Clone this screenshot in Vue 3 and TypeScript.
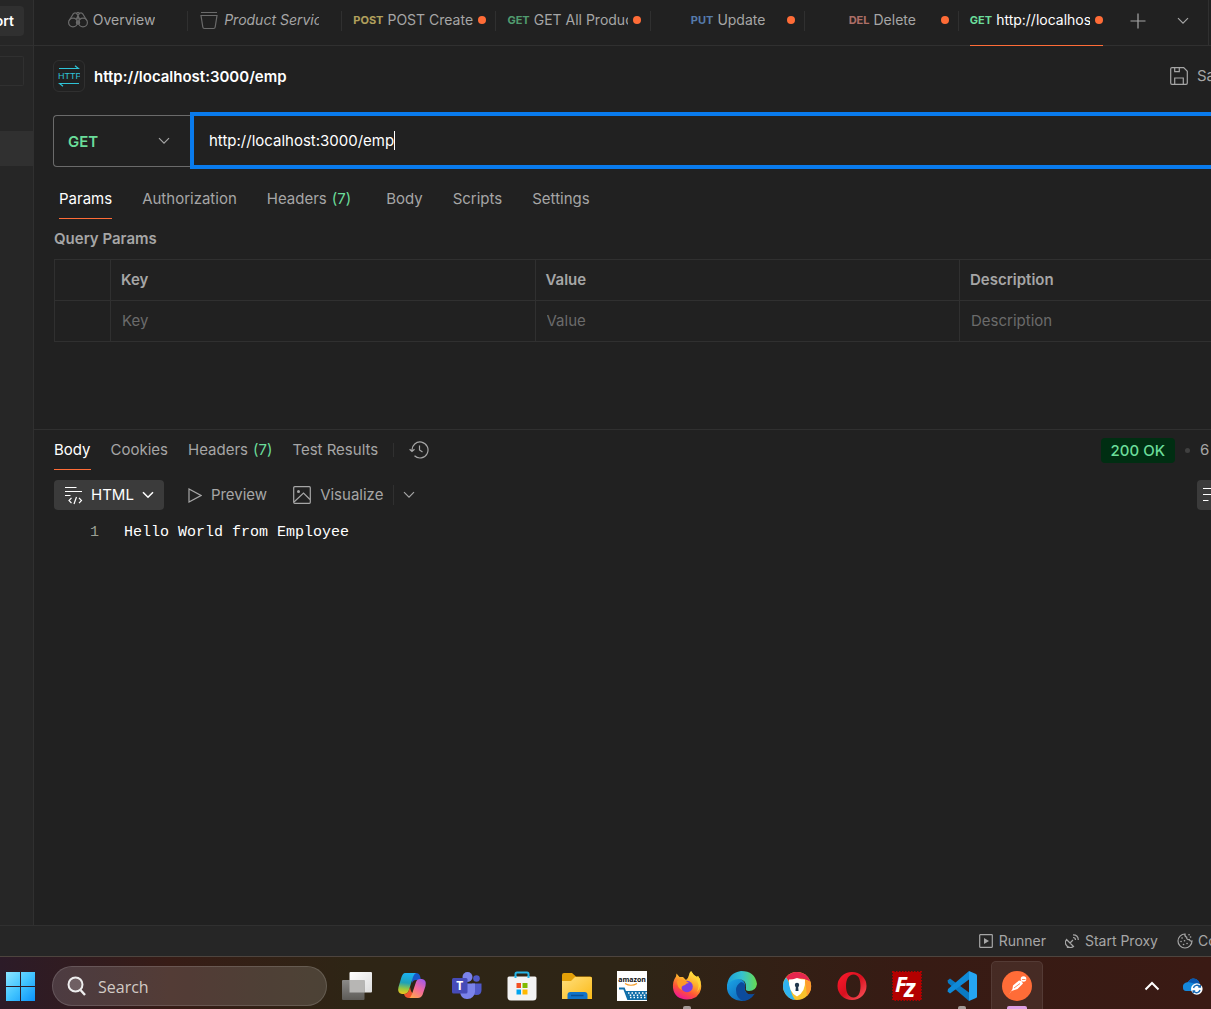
<script setup lang="ts">
import { ref } from 'vue'

interface RequestTab {
  method?: string
  tone?: string
  icon?: 'overview' | 'collection'
  name: string
  unsaved: boolean
  clipped: boolean
}

const tabs: RequestTab[] = [
  { icon: 'overview', name: 'Overview', unsaved: false, clipped: false },
  { icon: 'collection', name: 'Product Services', unsaved: false, clipped: true },
  { method: 'POST', tone: 'post', name: 'POST Create', unsaved: true, clipped: true },
  { method: 'GET', tone: 'get', name: 'GET All Products', unsaved: true, clipped: true },
  { method: 'PUT', tone: 'put', name: 'Update', unsaved: true, clipped: false },
  { method: 'DEL', tone: 'del', name: 'Delete', unsaved: true, clipped: false },
  { method: 'GET', tone: 'get', name: 'http://localhost:3000/emp', unsaved: true, clipped: true },
]
const activeTab = ref(6)

const requestSections = ['Params', 'Authorization', 'Headers', 'Body', 'Scripts', 'Settings']
const activeSection = ref('Params')

const responseSections = ['Body', 'Cookies', 'Headers', 'Test Results']
const activeResponse = ref('Body')

const method = ref('GET')
const url = ref('http://localhost:3000/emp')
const format = ref('HTML')
const columns = ['Key', 'Value', 'Description']
</script>

<template>
  <div class="screen">
    <div class="workspace">
      <aside class="sidebar">
        <div class="side-top"><button class="import">Import</button></div>
        <div class="side-filter"><input aria-label="Filter collections" /></div>
        <div class="side-item"></div>
      </aside>

      <main class="main">
        <nav class="tabbar">
          <div v-for="(tab, i) in tabs" :key="i" class="tab" :class="{ active: i === activeTab }">
            <button class="tab-body" :class="{ clipped: tab.clipped }" @click="activeTab = i">
              <svg v-if="tab.icon === 'overview'" class="tab-icon" width="20" height="18" viewBox="0 0 20 18">
                <circle cx="5" cy="11.5" r="4.4" /><circle cx="15" cy="11.5" r="4.4" /><circle cx="10" cy="11.5" r="1.6" />
                <path d="M1.2 9.5 5 3.2Q6.5 1 8.3 2.2L10 4.5l1.7-2.3Q13.500 1 15 3.200L18.800 9.500M8.300 2.200 10 1.400l1.700.8M8.700 7.500 10 4.500l1.300 3M7.500 7.800h5" />
              </svg>
              <svg v-if="tab.icon === 'collection'" class="tab-icon" width="20" height="19" viewBox="-1 0 20 19">
                <path d="M1 1.500h16M1 4.500h16L15.200 16Q15 17.500 13.600 17.500H4.400Q3 17.500 2.800 16Z" />
              </svg>
              <span v-if="tab.method" class="verb" :class="tab.tone">{{ tab.method }}</span>
              <span class="tab-name" :class="{ preview: tab.icon === 'collection' }">{{ tab.name }}</span>
            </button>
            <i v-if="tab.unsaved" class="unsaved"></i>
          </div>
          <div class="tab-actions">
            <button aria-label="New tab"><svg width="16" height="16" viewBox="0 0 16 16"><path d="M8 .5v15M.5 8h15" /></svg></button>
            <button aria-label="Tab list"><svg width="12" height="8" viewBox="0 0 12 8"><path d="m1 1.200 5 5 5-5" /></svg></button>
          </div>
          <div class="tab-end"></div>
        </nav>

        <header class="title-row">
          <span class="http-badge">
            <svg width="22" height="22" viewBox="0 0 22 22">
              <path d="M1 3.500h19.500L17 .8M21 18.500H1.500L5 21.200" />
              <text x="0" y="14">HTTP</text>
            </svg>
          </span>
          <h1>{{ url }}</h1>
          <button class="save">
            <svg width="18" height="18" viewBox="0 0 18 18"><path d="M2 .7h11.700l3.600 3.600V16q0 1.300-1.300 1.300H2Q.7 17.300.7 16V2Q.7.7 2 .7ZM4.700.7v4h4.600v-4M4.700 17v-6h8.600v6" /></svg>
            <span>Save</span>
          </button>
        </header>

        <form class="url-row" @submit.prevent>
          <div class="method">
            <select v-model="method" aria-label="Request method">
              <option>GET</option><option>POST</option><option>PUT</option><option>DELETE</option>
            </select>
            <svg width="12" height="8" viewBox="0 0 12 8"><path d="m1 1.200 5 5 5-5" /></svg>
          </div>
          <div class="url-field">
            <input v-model="url" type="text" aria-label="Request URL" /><i class="caret"></i>
          </div>
        </form>

        <nav class="sections">
          <button v-for="s in requestSections" :key="s" :class="{ active: s === activeSection, counted: s === 'Headers' }" @click="activeSection = s">
            {{ s }}<span v-if="s === 'Headers'" class="count">(7)</span>
          </button>
        </nav>

        <section class="params">
          <h2>Query Params</h2>
          <table>
            <thead>
              <tr><th class="check"></th><th v-for="c in columns" :key="c">{{ c }}</th></tr>
            </thead>
            <tbody>
              <tr><td></td><td v-for="c in columns" :key="c"><input type="text" :placeholder="c" :aria-label="c" /></td></tr>
            </tbody>
          </table>
        </section>

        <section class="response">
          <div class="response-head">
            <nav class="response-tabs">
              <button v-for="s in responseSections" :key="s" :class="{ active: s === activeResponse }" @click="activeResponse = s">
                {{ s }}<span v-if="s === 'Headers'" class="count">(7)</span>
              </button>
            </nav>
            <i class="rule short"></i>
            <button class="history" aria-label="Response history">
              <svg width="20" height="18" viewBox="0 0 20 18"><path d="M3 9.500A8 8 0 1 1 5.500 14.800M.6 8.200 3 10.500l2.500-2.300M10.500 4.500V9l3 2" /></svg>
            </button>
            <span class="status">200 OK</span>
            <i class="bullet"></i>
            <span class="timing">6 ms</span>
          </div>

          <div class="toolbar">
            <label class="format">
              <svg width="19" height="19" viewBox="0 0 19 19"><path d="M1 1.500h11.500M1 5.500h17M1 9.500h5.500M7.500 11.800 5 14.500l2.500 2.700M15 11.800l2.500 2.700L15 17.200M12.500 11 10 18" /></svg>
              <select v-model="format" aria-label="Response format"><option>HTML</option><option>JSON</option><option>XML</option></select>
              <svg class="arrow" width="12" height="8" viewBox="0 0 12 8"><path d="m1 1.200 5 5 5-5" /></svg>
            </label>
            <button class="tool preview-tool">
              <svg width="14" height="15" viewBox="0 0 14 15"><path d="M1 1v13l12-6.500Z" /></svg>Preview
            </button>
            <button class="tool">
              <svg width="18" height="18" viewBox="0 0 18 18"><rect x=".7" y=".7" width="16.600" height="16.600" rx="1" /><circle class="dot" cx="5.500" cy="5.500" r="1.500" /><path d="m1 16 9.500-9L17 13.500" /></svg>Visualize
            </button>
            <i class="rule"></i>
            <button class="more" aria-label="More views"><svg width="12" height="8" viewBox="0 0 12 8"><path d="m1 1.200 5 5 5-5" /></svg></button>
            <button class="wrap" aria-label="Wrap lines"><svg width="18" height="16" viewBox="0 0 18 16"><path d="M1 1.500h16M1 7.500h13q3 0 3 3t-3 3h-4M1 13.500h5.500" /></svg></button>
          </div>

          <div class="code"><span class="line-no">1</span><code>Hello World from Employee</code></div>
        </section>
      </main>
    </div>

    <footer class="statusbar">
      <button><svg width="14" height="14" viewBox="0 0 14 14"><rect x=".7" y=".7" width="12.600" height="12.600" rx=".5" /><path class="solid" d="m5 4 5 3-5 3Z" /></svg>Runner</button>
      <button><svg width="14" height="14" viewBox="0 0 14 14"><path d="M1.500 5.500a5 5 0 0 0 7 7ZM5 9l3-3M3 12l-.5 1.500h4M8 3.500Q10.500 3.500 10.500 6M8 .8q5.300 0 5.300 5.200" /></svg>Start Proxy</button>
      <button class="cookies"><svg width="16" height="16" viewBox="0 0 16 16"><path d="M8 1a7 7 0 1 0 7 7q-2 .5-2.700-1.500Q9.500 7 9.700 4.200 7.500 3.500 8 1Z" /><path class="specks" d="M5 5h.1M4 8.500h.1M7.500 7.800h.1M6.500 11.500h.1M10 10.500h.1M12 1.800h.1M13.500 4h.1" /></svg><span>Cookies</span></button>
    </footer>

    <div class="taskbar">
      <button class="start" aria-label="Start">
        <svg width="29" height="29" viewBox="0 0 29 29">
          <defs><linearGradient id="win" x1="0" y1="0" x2="29" y2="29" gradientUnits="userSpaceOnUse"><stop stop-color="#8ce4ff" /><stop offset=".5" stop-color="#42c4ff" /><stop offset="1" stop-color="#0b93fa" /></linearGradient></defs>
          <path fill="url(#win)" d="M0 0h14v14H0zM15 0h14v14H15zM0 15h14v14H0zM15 15h14v14H15z" />
        </svg>
      </button>
      <label class="search">
        <svg width="20" height="20" viewBox="0 0 20 20"><circle cx="8.500" cy="8.500" r="7" fill="#ffffff30" stroke="#eee" stroke-width="2" /><path d="m13.500 14 4.500 5" stroke="#eee" stroke-width="2.400" /></svg>
        <input type="search" placeholder="Search" aria-label="Search" />
      </label>

      <div class="apps">
        <button aria-label="Task view">
          <svg width="32" height="32" viewBox="0 0 32 32">
            <defs><linearGradient id="tv" x2="1" y2="1"><stop stop-color="#fff" /><stop offset="1" stop-color="#dcdcdc" /></linearGradient><linearGradient id="tv2" x2="0" y2="1"><stop stop-color="#8b8a88" /><stop offset="1" stop-color="#5d5b57" /></linearGradient></defs>
            <rect x="8.500" y="2" width="22.500" height="20.500" rx="1" fill="url(#tv)" /><rect x="1" y="10" width="22.500" height="20" rx="1" fill="url(#tv2)" /><path fill="#b7b6b4" d="M8.500 10h15v12.500h-15z" />
          </svg>
        </button>
        <button aria-label="Copilot">
          <svg width="32" height="32" viewBox="0 0 32 32">
            <defs>
              <linearGradient id="cpa" x1=".3" y1="0" x2=".2" y2="1"><stop stop-color="#1bb1f0" /><stop offset=".45" stop-color="#1ea1b8" /><stop offset=".75" stop-color="#9ac83d" /><stop offset="1" stop-color="#f3c31c" /></linearGradient>
              <linearGradient id="cpb" x1=".8" y1="0" x2=".2" y2="1"><stop stop-color="#a259e8" /><stop offset=".5" stop-color="#f36a9b" /><stop offset="1" stop-color="#ffa54d" /></linearGradient>
            </defs>
            <path fill="#1757c9" d="M16 3h4q3 0 4 3l1 4h-5q-3 0-4 3Z" />
            <path fill="url(#cpa)" d="M9 3h11q-2 1-3 4l-4 13q-1 4-5 4H6q-5-1-3.500-7L5.500 7Q7 3 9 3Z" />
            <path fill="#f0542e" d="M8 24q4 0 5-4l1-3q1 8 6 7-3 4-7 4-4 0-5-4Z" />
            <path fill="url(#cpb)" d="M13 28q2-1 3-4l4-12q1-3 4-3h2q5 1 3.500 7l-3 9q-1.500 3-4.500 3Z" />
          </svg>
        </button>
        <button aria-label="Teams">
          <svg width="32" height="32" viewBox="0 0 32 32">
            <circle cx="25.500" cy="8.500" r="3.300" fill="#5059c9" /><circle cx="16.500" cy="7" r="5" fill="#7b83eb" />
            <path fill="#5059c9" d="M21 13.500h9.500V20q0 5-5 5-2 0-4-1Z" /><path fill="#7b83eb" d="M9 13.500h15V22q-1 6.500-7.500 7T9 22Z" />
            <rect x="1" y="8" width="15.500" height="15.500" rx="1.500" fill="#464bb8" /><text x="8.800" y="20" text-anchor="middle" font-size="12" font-weight="700" fill="#fff">T</text>
          </svg>
        </button>
        <button aria-label="Microsoft Store">
          <svg width="32" height="32" viewBox="0 0 32 32">
            <path fill="none" stroke="#27b5e8" stroke-width="2" d="M9.500 7V4q0-1.500 1.500-1.500h10q1.500 0 1.500 1.500v3" />
            <path fill="#f3f3f3" d="M3 6.500h26q1.500 0 1.500 1.500v19q0 3.500-3.500 3.500H5q-3.500 0-3.500-3.500V8Q1.500 6.500 3 6.500Z" />
            <path fill="none" stroke="#27b5e8" stroke-width="2" d="M9.500 6v2M22.500 6v2" />
            <path fill="#f25022" d="M10.500 13H15v5h-4.500z" /><path fill="#7fba00" d="M16.500 13h5v5h-5z" /><path fill="#00a4ef" d="M10.500 19.500H15v5h-4.500z" /><path fill="#ffb900" d="M16.500 19.500h5v5h-5z" />
          </svg>
        </button>
        <button aria-label="File Explorer">
          <svg width="32" height="32" viewBox="0 0 32 32">
            <defs><linearGradient id="fe" x2="1" y2="1"><stop stop-color="#ffdf7d" /><stop offset="1" stop-color="#fbba17" /></linearGradient></defs>
            <path fill="#e3a008" d="M1 5q0-2 2-2h8l4 3.500h14q2 0 2 2V20H1Z" /><path fill="url(#fe)" d="M1 11h9l4-4h16q1 0 1 1.500V29H1Z" />
            <path fill="#1173c8" d="M6.500 29v-4q0-3 3-3h14q3 0 3 3v4Z" /><path fill="none" stroke="#0b4f94" stroke-width="1.500" d="M10 25.500h12.500" />
          </svg>
        </button>
        <button aria-label="Amazon">
          <svg width="32" height="32" viewBox="0 0 32 32">
            <path fill="#fff" d="M1 1h30v30H1z" /><text x="16" y="12" text-anchor="middle" font-size="7" font-weight="700" fill="#111">amazon</text>
            <path fill="none" stroke="#f59a23" stroke-width="1.200" d="M9 13.500q6 3.500 12 0" />
            <path fill="none" stroke="#0f6ea9" stroke-width="1.800" d="M3 18.500h5l4 10.500h19" />
            <path fill="#0f6ea9" d="M9.500 21H31v8H12.500Z" />
            <path stroke="#fff" stroke-width="1.500" stroke-dasharray="1.500 2" fill="none" d="M12 23h19M13.700 25.200H31M14 27.400h17" />
          </svg>
        </button>
        <button class="running" aria-label="Firefox">
          <svg width="32" height="32" viewBox="0 0 32 32">
            <defs><linearGradient id="ff" x1=".8" y1="0" x2=".3" y2="1"><stop stop-color="#fff24f" /><stop offset=".4" stop-color="#ffac2b" /><stop offset=".7" stop-color="#ff5436" /><stop offset="1" stop-color="#f0139b" /></linearGradient></defs>
            <path fill="url(#ff)" d="M18 5q0-2 2-4 2 4 6 6l1-1q4 6 3 13-2 10-14 10.500Q3.500 29 2 18 1.500 11 5 6.500l.5-3L8.500 7 12 7l3 3q2-1 3-5Z" />
            <circle cx="16" cy="16.500" r="5.800" fill="#7b3fe0" /><path fill="#ff9a25" d="M6 11q4-3 9 0l3 2q-3 0-4 2-5 1-3 5-5-2-5-9Z" />
            <path fill="#ffd535" d="M20 1q0 4 4 7 6 6 2 14 5-6 3-13l-2-3-1 1Q22 5 20 1Z" />
          </svg>
        </button>
        <button aria-label="Edge">
          <svg width="32" height="32" viewBox="0 0 32 32">
            <defs><linearGradient id="eg" x1="0" y1=".5" x2="1" y2=".5"><stop stop-color="#1b9fdc" /><stop offset=".5" stop-color="#35c2cf" /><stop offset="1" stop-color="#67dc4f" /></linearGradient><linearGradient id="eb" x2="1" y2="1"><stop stop-color="#1ba7e8" /><stop offset="1" stop-color="#0b55ab" /></linearGradient></defs>
            <path fill="url(#eb)" d="M1 15q5-8 13-6 6 2 5 8-1 4 3 7 3 1 6 0-4 6-12 7Q3 30 1 19Z" />
            <path fill="#0c4b9c" d="M10 20q0-5 5-8 5 1 4 6-1 4 3 6 4 1 7-.5-5 7-11 7.500-8-2-8-11Z" />
            <path fill="url(#eg)" d="M1 16Q2 3 15 1q14 0 16 13-1 7-8 7-4 0-3-3 1-8-7-9Q5 9 1 16Z" />
          </svg>
        </button>
        <button aria-label="Secure browser">
          <svg width="32" height="32" viewBox="0 0 32 32">
            <circle cx="16" cy="16" r="14" fill="#f9c22c" /><path fill="#e5264e" d="M5 7.500A14 14 0 0 1 29.500 12Q23 7 14 9l-6 2Z" /><path fill="#2fb3f0" d="M5 7.500A14 14 0 0 0 14 30q-4-6-5-14Q8 11 5 7.500Z" />
            <path fill="#ff9a2e" d="M29.500 12Q32 20 26 26L24 10Z" />
            <path fill="#fff" d="M16 8q4 1.500 8 1.500 1 12-8 17-9-5-8-17 4 0 8-1.500Z" /><circle cx="16" cy="15" r="2.200" fill="#21384e" /><path fill="#21384e" d="M15 15h2l.5 6h-3z" />
          </svg>
        </button>
        <button aria-label="Opera">
          <svg width="32" height="32" viewBox="0 0 32 32">
            <defs><linearGradient id="op" x2="1" y2="1"><stop stop-color="#ff1b2d" /><stop offset=".5" stop-color="#d8101f" /><stop offset="1" stop-color="#ff5a60" /></linearGradient></defs>
            <path fill="url(#op)" fill-rule="evenodd" d="M16 2a14.500 14 0 1 1 0 28 14.500 14 0 1 1 0-28Zm1.500 2.500c-5 0-7.500 5-7.500 11.500s2.500 11.500 7.500 11.500 7-5 7-11.500-2-11.500-7-11.500Z" />
          </svg>
        </button>
        <button aria-label="FileZilla">
          <svg width="32" height="32" viewBox="0 0 32 32">
            <path fill="#b30000" stroke="#b30000" stroke-dasharray="1.500 1.500" stroke-width="2" d="M2 2h28v28H2z" />
            <text x="4" y="22" font-size="22" font-style="italic" font-weight="700" fill="#fff">F</text><text x="13" y="27" font-size="25" font-style="italic" font-weight="700" fill="#fff">z</text>
          </svg>
        </button>
        <button class="running" aria-label="Visual Studio Code">
          <svg width="32" height="32" viewBox="0 0 32 32">
            <path fill="#0a7ac4" d="M1.500 10.500 4 8.500l19 14V31L2 13Z" /><path fill="#0f8ad8" d="M1.500 21.500 4 23.500 23 9.500V1L2 19Z" /><path fill="#25a5f2" d="M23 1l7 3q1 .5 1 1.500v21q0 1-1 1.500l-7 3Z" />
          </svg>
        </button>
        <button class="current" aria-label="Postman">
          <svg width="32" height="32" viewBox="0 0 32 32">
            <circle cx="16" cy="16" r="15" fill="#ff6c37" />
            <circle cx="22.500" cy="9" r="2.800" fill="#fff" /><path fill="#fff" d="m12 15.500 6-5 2.500.5 1.500 2.500-5.500 5.500-6 2L8 24.500l3.500-5.500Z" /><path stroke="#ff6c37" stroke-width=".8" fill="none" d="m13 18 6-4.500M21 9.500h3.500" />
          </svg>
        </button>
      </div>

      <div class="tray">
        <button aria-label="Hidden icons"><svg width="16" height="10" viewBox="0 0 16 10"><path fill="none" stroke="#fff" stroke-width="2" d="m1.500 8.500 6.500-6.500 6.500 6.500" /></svg></button>
        <button aria-label="OneDrive">
          <svg width="22" height="18" viewBox="0 0 22 18">
            <path fill="#1488dc" d="M1 11q-1-5 5-6Q9 0 14 2q4 2 3.500 6L12 14H4q-3-.5-3-3Z" /><path fill="#0a57b0" d="M6 5Q9 0 14 2q4 2 3.500 6-6-2-11.500-3Z" />
            <circle cx="14.800" cy="12" r="5.800" fill="#fff" /><path fill="none" stroke="#1669b5" stroke-width="1.400" d="M11.500 11a3.500 3.500 0 0 1 6-1.500M18.300 8v2h-2M18 13a3.500 3.500 0 0 1-6 1.500M11.200 16v-2h2" />
          </svg>
        </button>
      </div>
    </div>
  </div>
</template>

<style>
html,
body {
  background: #212121;
}
body {
  margin: 0;
}
</style>

<style scoped>
* {
  box-sizing: border-box;
}
.screen {
  display: flex;
  flex-direction: column;
  min-height: 100vh;
  overflow: hidden;
  color: #a6a6a6;
  font: 15px/20px Inter, 'Noto Sans', sans-serif;
}
button,
input,
select {
  margin: 0;
  padding: 0;
  border: 0;
  outline: 0;
  background: none;
  color: inherit;
  font: inherit;
}
select {
  appearance: none;
  field-sizing: content;
}
button {
  white-space: nowrap;
}
svg {
  display: block;
  flex: none;
}
.workspace svg,
.statusbar svg {
  fill: none;
  stroke: currentColor;
  stroke-width: 1.2;
}
.workspace {
  display: flex;
  flex: 1;
}

/* sidebar */
.sidebar {
  flex: none;
  width: 34px;
  overflow: hidden;
  border-right: 1px solid #303030;
  background: #262626;
}
.side-top {
  display: flex;
  justify-content: flex-end;
  height: 46px;
  padding: 6px 9px 0 0;
  border-bottom: 1px solid #303030;
}
.import {
  flex: none;
  height: 30px;
  padding: 0 10px;
  border-radius: 4px;
  background: #303030;
  color: #fff;
  font-size: 14px;
  font-weight: 600;
}
.side-filter {
  padding: 10px 9px 0 0;
}
.side-filter input {
  display: block;
  width: 100%;
  height: 30px;
  border: 1px solid #303030;
  border-left: 0;
  border-radius: 0 2px 2px 0;
}
.side-item {
  height: 35px;
  margin-top: 45px;
  background: #303030;
}

/* request tabs */
.main {
  flex: 1;
  min-width: 0;
  overflow: hidden;
}
.tabbar {
  display: flex;
  height: 46px;
  border-bottom: 1px solid #303030;
}
.tab {
  position: relative;
  flex: 1;
  min-width: 0;
  height: 46px;
  padding: 0 10px 0 11px;
  font-size: 14px;
}
.tab::after {
  position: absolute;
  top: 11px;
  right: 0;
  width: 1px;
  height: 20px;
  background: #303030;
  content: '';
}
.tab.active::after {
  display: none;
}
.tab-body {
  display: flex;
  gap: 4px;
  align-items: center;
  justify-content: center;
  width: 100%;
  height: 46px;
  padding-bottom: 6px;
}
.tab-body.clipped {
  justify-content: flex-start;
  padding-right: 13px;
}
.tab.active .tab-body {
  border-bottom: 1px solid #ff6c37;
  padding-bottom: 5px;
  color: #fff;
}
.tab-icon {
  margin-right: 1px;
  color: #6b6b6b;
}
.tab-name {
  min-width: 0;
  overflow: hidden;
}
.preview {
  font-style: italic;
}
.verb {
  font-size: 11px;
  font-weight: 700;
  opacity: 0.65;
}
.active .verb {
  opacity: 1;
}
.post {
  color: #ffe47e;
}
.get {
  color: #6bdd9a;
}
.put {
  color: #74aef6;
}
.del {
  color: #f79a8e;
}
.unsaved {
  position: absolute;
  top: 16px;
  right: 10px;
  width: 8px;
  height: 8px;
  border-radius: 50%;
  background: #ff6c37;
}
.tab-actions {
  display: flex;
  flex: none;
  gap: 31px;
  align-items: center;
  width: 95px;
  padding: 0 0 4px 17px;
}
.tab-end {
  flex: none;
  width: 3px;
  border-left: 1px solid #303030;
}

/* title and url */
.title-row {
  display: flex;
  gap: 9px;
  align-items: center;
  height: 60px;
  padding-left: 19px;
}
.http-badge {
  display: grid;
  place-items: center;
  width: 32px;
  height: 32px;
  border: 1px solid #303030;
  border-radius: 6px;
  color: #2fc3d6;
}
.http-badge text {
  fill: currentColor;
  stroke: none;
  font: 9px 'Liberation Sans Narrow', 'Liberation Sans', sans-serif;
}
h1,
h2 {
  margin: 0;
  font-size: 15px;
  font-weight: 600;
}
h1 {
  padding-top: 2px;
  color: #fff;
}
.save {
  display: flex;
  gap: 9px;
  align-items: center;
  width: 41px;
  margin-left: auto;
  overflow: hidden;
}
.url-row {
  display: flex;
  align-items: center;
  margin-top: 6px;
  padding-left: 19px;
}
.method {
  display: flex;
  flex: none;
  align-items: center;
  justify-content: space-between;
  width: 137px;
  height: 52px;
  padding: 0 20px 0 14px;
  border: 1px solid #6b6b6b;
  border-right: 0;
  border-radius: 4px 0 0 4px;
}
.method select {
  padding-top: 2px;
  color: #6bdd9a;
  font-weight: 600;
}
.url-field {
  display: flex;
  flex: 1;
  align-items: center;
  height: 57px;
  padding-left: 15px;
  border: 4px solid #097bed;
  border-right: 0;
  color: #fff;
}
.url-field input {
  field-sizing: content;
}
.caret {
  width: 1px;
  height: 19px;
  background: #fff;
}

/* section tabs */
.sections {
  display: flex;
  gap: 30px;
  padding: 10px 0 0 25px;
}
.sections button,
.response-tabs button {
  height: 40px;
  border-bottom: 1px solid transparent;
  padding-top: 1px;
}
.sections .counted {
  padding-right: 5px;
}
.sections .active,
.response-tabs .active {
  border-color: #ff6c37;
  color: #fff;
}
.count {
  margin-left: 5px;
  color: #6bdd9a;
}

/* query params */
.params {
  padding-left: 20px;
}
h2 {
  line-height: 40px;
}
table {
  width: 115%;
  border-collapse: collapse;
  table-layout: fixed;
}
th,
td {
  height: 41px;
  padding: 0 10px;
  border: 1px solid #303030;
  text-align: left;
}
th {
  font-weight: 600;
}
.check {
  width: 56px;
}
td input {
  display: block;
  width: 100%;
  padding-left: 1px;
}
td input::placeholder {
  color: #6b6b6b;
}

/* response */
.response {
  margin-top: 87px;
  border-top: 1px solid #303030;
}
.response-head {
  display: flex;
  align-items: center;
  height: 40px;
  padding-left: 20px;
}
.response-tabs {
  display: flex;
  gap: 20px;
}
.rule {
  width: 1px;
  height: 20px;
  background: #303030;
}
.rule.short {
  height: 14px;
  margin: 0 15px;
}
.status {
  margin-left: auto;
  padding: 0 10px;
  border-radius: 4px;
  background: #002e12;
  color: #6bdd9a;
  font-weight: 500;
  line-height: 25px;
}
.bullet {
  width: 5px;
  height: 5px;
  margin: 0 10px;
  border-radius: 50%;
  background: #404040;
}
.timing {
  width: 11px;
  overflow: hidden;
  white-space: nowrap;
}
.toolbar {
  display: flex;
  align-items: center;
  height: 30px;
  margin-top: 10px;
  padding-left: 20px;
}
.format {
  display: flex;
  gap: 8px;
  align-items: center;
  height: 30px;
  padding: 0 10px;
  border-radius: 4px;
  background: #3b3b3b;
  color: #fff;
}
.format .arrow {
  stroke-width: 1.6;
}
.tool {
  display: flex;
  gap: 9px;
  align-items: center;
  margin-right: 10px;
}
.preview-tool {
  margin: 0 26px 0 24px;
}
.dot {
  fill: currentColor;
  stroke: none;
}
.more {
  margin-left: 9px;
}
.wrap {
  width: 14px;
  height: 30px;
  margin-left: auto;
  padding-left: 5px;
  overflow: hidden;
  border-radius: 4px 0 0 4px;
  background: #3b3b3b;
  color: #fff;
}
.code {
  display: flex;
  gap: 25px;
  padding: 12px 0 0 56px;
  font: 15px/22px 'Liberation Mono', monospace;
}
.code code {
  color: #fff;
  font: inherit;
}
.line-no {
  color: #9a9f94;
}

/* status bar */
.statusbar {
  display: flex;
  gap: 19px;
  justify-content: flex-end;
  height: 31px;
  border-top: 1px solid #303030;
  background: #262626;
  font-size: 14px;
}
.statusbar button {
  display: flex;
  gap: 6px;
  align-items: center;
}
.statusbar .cookies {
  width: 34px;
  gap: 5px;
  overflow: hidden;
}
.statusbar .solid {
  fill: currentColor;
  stroke: none;
}
.statusbar .specks {
  stroke-linecap: round;
  stroke-width: 1.6;
}

/* taskbar */
.taskbar {
  display: flex;
  align-items: center;
  height: 53px;
  padding: 6px 7px 0 6px;
  border-top: 1px solid #4d443e;
  background: linear-gradient(90deg, #2c1b28 0, #371c16 14%, #2e2515 29%, #2e2516 52%, #371b14 75%, #3a1a14 100%);
}
.search {
  display: flex;
  gap: 11px;
  align-items: center;
  width: 275px;
  height: 40px;
  margin: 0 2px 0 17px;
  padding-left: 14px;
  border: 1px solid #ffffff24;
  border-radius: 20px;
  background: #ffffff24;
}
.search input {
  flex: 1;
  min-width: 0;
  padding-top: 2px;
  font: 16px/24px 'Open Sans', 'Noto Sans', sans-serif;
}
.search input::placeholder {
  color: #d2cbc6;
}
.apps {
  display: flex;
}
.apps button {
  position: relative;
  display: grid;
  place-items: center;
  width: 55px;
  height: 46px;
}
.apps text {
  font-family: 'Open Sans', sans-serif;
}
.running::after,
.current::after {
  position: absolute;
  bottom: 0;
  width: 8px;
  height: 3px;
  border-radius: 2px 2px 0 0;
  background: #a39a96;
  content: '';
}
.current::after {
  width: 20px;
  background: #dda0e6;
}
.current::before {
  position: absolute;
  top: -2px;
  width: 50px;
  height: 48px;
  border: 1px solid #ffffff14;
  border-radius: 5px 5px 0 0;
  background: #ffffff12;
  content: '';
}
.current svg {
  position: relative;
}
.tray {
  display: flex;
  gap: 22px;
  align-items: center;
  margin-left: auto;
}
</style>
